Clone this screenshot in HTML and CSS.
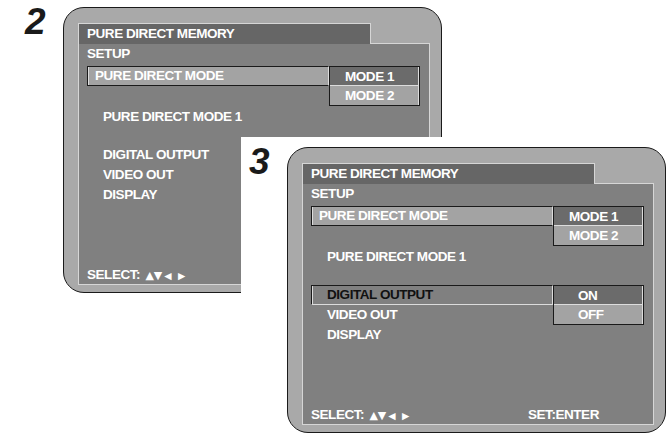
FILE: index.html
```html
<!DOCTYPE html>
<html lang="en">

<head>
  <meta charset="UTF-8">
  <meta name="viewport" content="width=device-width, initial-scale=1.0">
  <title>Pure Direct Memory</title>
  <link rel="stylesheet" href="styles.css">
</head>

<body>
  <div class="sheet">

    <section class="step step-2">
      <div class="step-num">2</div>
      <div class="unit">
        <div class="screen-title">PURE DIRECT MEMORY</div>
        <div class="screen-body">
          <div class="screen-head">SETUP</div>
          <div class="opt opt-top">
            <div class="opt-name">PURE DIRECT MODE</div>
            <div class="pick">
              <div class="pick-item is-on">MODE 1</div>
              <div class="pick-item">MODE 2</div>
            </div>
          </div>
          <div class="status">PURE DIRECT MODE 1</div>
          <div class="menu">
            <div class="menu-item">DIGITAL OUTPUT</div>
            <div class="menu-item">VIDEO OUT</div>
            <div class="menu-item">DISPLAY</div>
          </div>
          <div class="foot">
            <div class="foot-select">SELECT: <span class="arrows">▲▼<span class="arrow-side">◀ ▶</span></span></div>
          </div>
        </div>
      </div>
    </section>

    <section class="step step-3">
      <div class="step-num">3</div>
      <div class="unit">
        <div class="screen-title">PURE DIRECT MEMORY</div>
        <div class="screen-body">
          <div class="screen-head">SETUP</div>
          <div class="opt opt-top">
            <div class="opt-name">PURE DIRECT MODE</div>
            <div class="pick">
              <div class="pick-item is-on">MODE 1</div>
              <div class="pick-item">MODE 2</div>
            </div>
          </div>
          <div class="status">PURE DIRECT MODE 1</div>
          <div class="menu">
            <div class="opt opt-plain">
              <div class="opt-name">DIGITAL OUTPUT</div>
              <div class="pick pick-onoff">
                <div class="pick-item is-on">ON</div>
                <div class="pick-item">OFF</div>
              </div>
            </div>
            <div class="menu-item">VIDEO OUT</div>
            <div class="menu-item">DISPLAY</div>
          </div>
          <div class="foot">
            <div class="foot-select">SELECT: <span class="arrows">▲▼<span class="arrow-side">◀ ▶</span></span></div>
            <div class="foot-set">SET:ENTER</div>
          </div>
        </div>
      </div>
    </section>

  </div>
</body>

</html>
```

FILE: styles.css
```css
body {
  margin: 0;
  background: #ffffff;
  font-family: "Liberation Sans", Arial, sans-serif;
}

.sheet {
  display: grid;
  grid-template-columns: 241px 201px 226px;
  grid-template-rows: 137px 153px 145px;
  width: 668px;
  height: 435px;
  overflow: hidden;
}

.step {
  display: flex;
  align-items: flex-start;
}

.step-2 {
  grid-area: 1 / 1 / 3 / 3;
  padding: 7px 0 0 25px;
}

.step-3 {
  grid-area: 2 / 2 / 4 / 4;
  padding: 10px 0 0 8px;
  background: #ffffff;
  z-index: 1;
}

.step-num {
  width: 38px;
  margin-top: -4px;
  font-size: 37px;
  line-height: 1;
  font-weight: bold;
  font-style: italic;
  color: #1a1a1a;
}

.unit {
  width: 379px;
  box-sizing: border-box;
  padding: 15px 11px 7px 14px;
  border: 1px solid #1a1a1a;
  border-radius: 21px;
  background: #a9a9a9;
  color: #ffffff;
  font-size: 13.5px;
  font-weight: bold;
  letter-spacing: -0.45px;
}

.screen-title {
  position: relative;
  z-index: 1;
  width: 293px;
  height: 21px;
  box-sizing: border-box;
  margin-bottom: -1px;
  padding-left: 8px;
  border: 1px solid #d6d6d6;
  border-bottom: none;
  background: #666666;
  line-height: 20px;
}

.screen-body {
  display: flex;
  flex-direction: column;
  width: 352px;
  height: 242px;
  box-sizing: border-box;
  padding-left: 8px;
  border: 1px solid #d6d6d6;
  background: #808080;
}

.screen-head {
  line-height: 19px;
}

.opt {
  display: flex;
  align-items: flex-start;
  height: 20px;
}

.opt-top {
  margin-top: 3px;
}

.opt-name {
  width: 242px;
  height: 20px;
  box-sizing: border-box;
  padding-left: 7px;
  border: 1px solid #1a1a1a;
  border-right-color: #dcdcdc;
  box-shadow: inset 1px 0 #dcdcdc;
  background: #a3a3a3;
  line-height: 18px;
}

.opt-plain .opt-name {
  padding-left: 15px;
  border-bottom-color: #dcdcdc;
  background: #808080;
  color: #111111;
}

.pick {
  width: 91px;
  box-sizing: border-box;
  border: 1px solid #1a1a1a;
}

.pick-item {
  height: 19px;
  padding-left: 15px;
  background: #a3a3a3;
  box-shadow: inset -1px 0 #dcdcdc;
  line-height: 19px;
}

.pick-item.is-on {
  background: #6b6b6b;
  box-shadow: inset -1px -1px #dcdcdc;
}

.pick-onoff .pick-item {
  padding-left: 24px;
}

.status {
  margin-top: 21px;
  padding-left: 16px;
  line-height: 20px;
}

.menu {
  margin-top: 18px;
}

.menu-item {
  height: 20px;
  padding-left: 16px;
  line-height: 20px;
}

.foot {
  display: flex;
  margin-top: auto;
  line-height: 17px;
}

.foot-select {
  width: 217px;
}

.arrows {
  margin-left: 2px;
  font-family: "DejaVu Sans", sans-serif;
  font-size: 11px;
  letter-spacing: 0;
}

.arrow-side {
  margin-left: 2px;
  font-size: 9.5px;
  word-spacing: 3px;
}
```
